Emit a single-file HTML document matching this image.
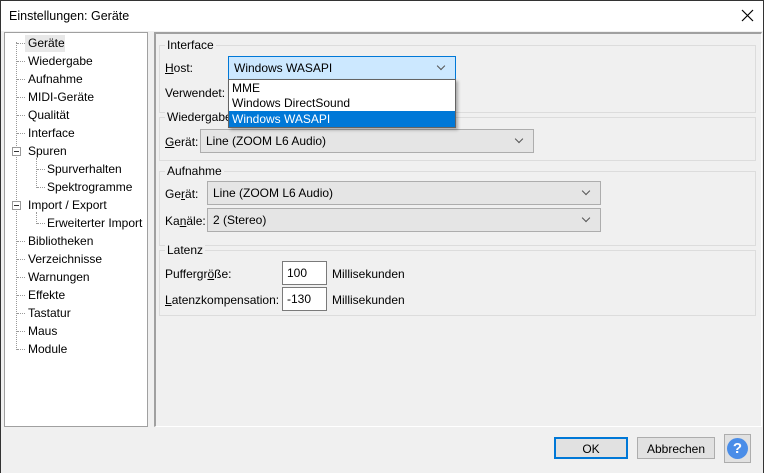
<!DOCTYPE html>
<html><head><style>
*{box-sizing:border-box;margin:0;padding:0}
body{width:764px;height:473px;background:#333;font-family:"Liberation Sans",sans-serif;font-size:12px;color:#000;position:relative;overflow:hidden}
.win{position:absolute;left:1px;top:1px;width:762px;height:472px;background:#f0f0f0}
.title{position:absolute;left:0;top:0;width:762px;height:30px;background:#fff}
.title span{position:absolute;left:8px;top:8px;font-size:12.5px}
.a{position:absolute;white-space:nowrap}
.tree{position:absolute;left:3px;top:31px;width:144px;height:395px;background:#fff;border:1px solid #a0a0a0}
.panel{position:absolute;left:153px;top:31px;width:608px;height:395px;border-left:2px solid #a0a0a0;border-top:2px solid #a0a0a0;border-right:1px solid #fff;border-bottom:1px solid #fff}
.grp{position:absolute;border:1px solid #dcdcdc;left:3px;width:597px}
.lbl{position:absolute;background:#f0f0f0;padding:0 2px;left:5px;top:-8px}
.cb{position:absolute;height:24px;background:#e5e5e5;border:1px solid #adadad;padding:4px 5px}
.cb:after{content:"";position:absolute;right:11px;top:6px;width:5px;height:5px;border-right:1px solid #555;border-bottom:1px solid #555;transform:rotate(45deg)}
.in{position:absolute;height:24px;width:45px;background:#fff;border:1px solid #7a7a7a;padding:4px 4px}
.dot{position:absolute;border-left:1px dotted #999}
.hd{position:absolute;border-top:1px dotted #999;width:8px}
.pm{position:absolute;width:9px;height:9px;border:1px solid #999;background:#fff}
.pm:after{content:"";position:absolute;left:1px;top:3px;width:5px;border-top:1px solid #333}
u{text-decoration:underline}
.btn{position:absolute;height:22px;background:#e1e1e1;border:1px solid #adadad;text-align:center;padding-top:4px}
</style></head><body>
<div class="win">
<div class="title"><span>Einstellungen: Geräte</span>
<svg style="position:absolute;left:740px;top:8px" width="13" height="13"><path d="M1 1L12 12M12 1L1 12" stroke="#000" stroke-width="1.2"/></svg></div>

<div class="tree">
<div class="dot" style="left:11px;top:9px;height:308px"></div>
<div class="dot" style="left:31px;top:125px;height:30px"></div>
<div class="dot" style="left:31px;top:179px;height:12px"></div>
<div style="position:absolute;left:20px;top:2px;width:40px;height:17px;background:#e8e8e8"></div>
<div class="hd" style="left:12px;top:10px"></div><div class="a" style="left:23px;top:3px">Geräte</div>
<div class="hd" style="left:12px;top:28px"></div><div class="a" style="left:23px;top:21px">Wiedergabe</div>
<div class="hd" style="left:12px;top:46px"></div><div class="a" style="left:23px;top:39px">Aufnahme</div>
<div class="hd" style="left:12px;top:64px"></div><div class="a" style="left:23px;top:57px">MIDI-Geräte</div>
<div class="hd" style="left:12px;top:82px"></div><div class="a" style="left:23px;top:75px">Qualität</div>
<div class="hd" style="left:12px;top:100px"></div><div class="a" style="left:23px;top:93px">Interface</div>
<div class="pm" style="left:7px;top:114px"></div><div class="a" style="left:23px;top:111px">Spuren</div>
<div class="hd" style="left:32px;top:136px"></div><div class="a" style="left:42px;top:129px">Spurverhalten</div>
<div class="hd" style="left:32px;top:154px"></div><div class="a" style="left:42px;top:147px">Spektrogramme</div>
<div class="pm" style="left:7px;top:168px"></div><div class="a" style="left:23px;top:165px">Import / Export</div>
<div class="hd" style="left:32px;top:190px"></div><div class="a" style="left:42px;top:183px">Erweiterter Import</div>
<div class="hd" style="left:12px;top:208px"></div><div class="a" style="left:23px;top:201px">Bibliotheken</div>
<div class="hd" style="left:12px;top:226px"></div><div class="a" style="left:23px;top:219px">Verzeichnisse</div>
<div class="hd" style="left:12px;top:244px"></div><div class="a" style="left:23px;top:237px">Warnungen</div>
<div class="hd" style="left:12px;top:262px"></div><div class="a" style="left:23px;top:255px">Effekte</div>
<div class="hd" style="left:12px;top:280px"></div><div class="a" style="left:23px;top:273px">Tastatur</div>
<div class="hd" style="left:12px;top:298px"></div><div class="a" style="left:23px;top:291px">Maus</div>
<div class="hd" style="left:12px;top:316px"></div><div class="a" style="left:23px;top:309px">Module</div>
</div>

<div class="panel">
<div class="grp" style="top:11px;height:68px"><div class="lbl">Interface</div>
<div class="a" style="left:5px;top:15px"><u>H</u>ost:</div>
<div class="a" style="left:5px;top:40px">Verwendet:</div></div>
<div class="grp" style="top:83px;height:44px"><div class="lbl">Wiedergabe</div>
<div class="a" style="left:5px;top:17px"><u>G</u>erät:</div>
<div class="cb" style="left:40px;top:11px;width:334px">Line (ZOOM L6 Audio)</div></div>
<div class="grp" style="top:137px;height:75px"><div class="lbl">Aufnahme</div>
<div class="a" style="left:5px;top:15px">Ge<u>r</u>ät:</div>
<div class="cb" style="left:47px;top:9px;width:394px">Line (ZOOM L6 Audio)</div>
<div class="a" style="left:5px;top:42px">Ka<u>n</u>äle:</div>
<div class="cb" style="left:47px;top:36px;width:394px">2 (Stereo)</div></div>
<div class="grp" style="top:216px;height:66px"><div class="lbl">Latenz</div>
<div class="a" style="left:5px;top:16px">Puffergr<u>ö</u>ße:</div>
<div class="in" style="left:122px;top:10px">100</div>
<div class="a" style="left:172px;top:16px">Millisekunden</div>
<div class="a" style="left:5px;top:42px"><u>L</u>atenzkompensation:</div>
<div class="in" style="left:122px;top:36px">-130</div>
<div class="a" style="left:172px;top:42px">Millisekunden</div></div>
</div>

<div class="cb" style="left:227px;top:55px;width:228px;background:#cce8ff;border-color:#0078d7">Windows WASAPI</div>
<div style="position:absolute;left:227px;top:78px;width:228px;height:49px;background:#fff;border:1px solid #646464;box-shadow:2px 2px 3px rgba(0,0,0,.3)">
<div class="a" style="left:3px;top:1px">MME</div>
<div class="a" style="left:3px;top:16px">Windows DirectSound</div>
<div style="position:absolute;left:0;top:31px;width:226px;height:16px;background:#0078d7;color:#fff;padding:1px 3px">Windows WASAPI</div>
</div>

<div class="btn" style="left:553px;top:436px;width:74px;border:2px solid #0078d7;padding-top:3px">OK</div>
<div class="btn" style="left:636px;top:436px;width:78px">Abbrechen</div>
<div style="position:absolute;left:723px;top:433px;width:27px;height:29px;background:#e1e1e1;border:1px solid #adadad">
<div style="position:absolute;left:2px;top:3px;width:21px;height:21px;border-radius:50%;background:#4a8de8;color:#fff;font-weight:bold;font-size:15px;text-align:center;line-height:21px">?</div></div>
</div>
</body></html>
